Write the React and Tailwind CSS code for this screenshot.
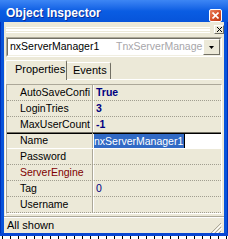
import React from "react";

const rows = [
  { name: "AutoSaveConfi", value: "True", bold: true },
  { name: "LoginTries", value: "3", bold: true },
  { name: "MaxUserCount", value: "-1", bold: true },
  { name: "Name", value: "nxServerManager1", selected: true },
  { name: "Password", value: "" },
  { name: "ServerEngine", value: "", isRef: true },
  { name: "Tag", value: "0" },
  { name: "Username", value: "" },
];

const ticks = Array.from({ length: 29 }, (_, i) => i);

const CloseButton = () => (
  <div className="w-[13px] h-[13px] rounded-[2px] border border-white bg-gradient-to-br from-[#E8825F] via-[#D9532E] to-[#B9360F] flex items-center justify-center">
    <svg width="7" height="7" viewBox="0 0 7 7">
      <path d="M0.5 0.5 L6.5 6.5 M6.5 0.5 L0.5 6.5" stroke="#fff" strokeWidth="1.6" />
    </svg>
  </div>
);

const GridRow = ({ row, nextSelected }) => {
  const bottom = nextSelected
    ? "border-b border-solid border-[#716F64]"
    : row.selected
    ? "border-b border-solid border-white"
    : "border-b border-dotted border-[#A19E90]";
  return (
    <div
      className={
        "flex h-[16px] " +
        bottom +
        (row.selected ? " shadow-[inset_0_1px_0_#000]" : "")
      }
    >
      <div
        className={
          "w-[86px] shrink-0 pl-[13px] flex items-center border-r border-[#ACA899] whitespace-nowrap overflow-hidden " +
          (row.isRef ? "text-[#800000]" : "text-black")
        }
      >
        {row.name}
      </div>
      {row.selected ? (
        <div className="flex-1 flex items-center bg-white pl-[1px] mt-[1px]">
          <span className="bg-[#316AC5] text-white leading-[14px] h-[14px] pr-[1px]">
            {row.value}
          </span>
          <span className="w-[1px] h-[14px] bg-black" />
        </div>
      ) : (
        <div
          className={
            "flex-1 flex items-center border-l border-white pl-[2px] text-[#000080] " +
            (row.bold ? "font-bold" : "")
          }
        >
          {row.value}
        </div>
      )}
    </div>
  );
};

export default function App() {
  return (
    <div className="w-[228px] h-[239px] overflow-hidden flex flex-col bg-white font-['Liberation_Sans',Arial,sans-serif] text-[10.5px]">
      {/* title bar */}
      <div className="h-[22px] shrink-0 flex justify-between bg-gradient-to-b from-[#3D86F4] via-[#0A5DE3] to-[#0754DA]">
        <div className="pl-[6px] pt-[6px] text-white font-bold text-[12px] leading-[14px] [text-shadow:1px_1px_0_#0A2F9C]">
          Object Inspector
        </div>
        <div className="pr-[6px] pt-[9px]">
          <CloseButton />
        </div>
      </div>

      <div className="flex h-[211px] shrink-0">
        <div className="w-[4px] bg-[#0853DA] border-l border-[#0031B8]" />
        <div className="w-[220px] bg-[#ECE9D8] flex flex-col">
          {/* grabber */}
          <div className="h-[13px] flex items-start">
            <div className="ml-[2px] w-[204px] pt-[5px] flex flex-col">
              <div className="h-[3px] border-t border-white border-b border-[#ACA899]" />
              <div className="h-[3px] border-t border-white border-b border-[#ACA899]" />
            </div>
            <div className="ml-[4px] mt-[3px] w-[10px] h-[9px] border border-t-white border-l-white border-r-[#716F64] border-b-[#716F64] flex items-center justify-center">
              <svg width="5" height="5" viewBox="0 0 5 5">
                <path d="M0 0 L5 5 M5 0 L0 5" stroke="#000" strokeWidth="1" />
              </svg>
            </div>
          </div>

          {/* combo */}
          <div className="mt-[2px] mx-[2px] h-[20px] border border-t-[#ACA899] border-l-[#ACA899] border-r-white border-b-white">
            <div className="h-full border border-t-[#716F64] border-l-[#716F64] border-r-[#F1EFE2] border-b-[#F1EFE2] bg-white flex">
              <div className="flex-1 flex items-center pl-[2px] whitespace-nowrap overflow-hidden text-[10.5px]">
                <span className="w-[106px] shrink-0 text-black">nxServerManager1</span>
                <span className="text-[#A7A6AA]">TnxServerManage</span>
              </div>
              <div className="w-[17px] h-[16px] bg-[#ECE9D8] border border-t-white border-l-white border-r-[#716F64] border-b-[#716F64] flex items-center justify-center">
                <svg width="5" height="3" viewBox="0 0 5 3">
                  <path d="M0 0 H5 L2.5 3 Z" fill="#000" />
                </svg>
              </div>
            </div>
          </div>

          {/* tabs */}
          <div className="mt-[3px] ml-[1px] mr-[2px] h-[20px] flex items-end border-b border-white">
            <div className="relative -mb-px h-[20px] w-[62px] bg-[#ECE9D8] border-t border-l border-white border-r border-r-[#716F64] rounded-t-[2px] pl-[9px] pt-[2px] leading-[12px] text-black text-[11px]">
              Properties
            </div>
            <div className="h-[17px] w-[44px] border-t border-white border-r border-r-[#716F64] rounded-tr-[2px] pl-[6px] pt-[1px] leading-[12px] text-black text-[11px]">
              Events
            </div>
          </div>

          {/* page */}
          <div className="ml-[1px] mr-[1px] flex-1 border-l border-white flex flex-col">
            <div className="mt-[4px] w-[216px] border-t border-l border-[#ACA899] border-r border-r-white border-b border-b-white flex flex-col">
              {rows.map((row, i) => (
                <GridRow
                  key={row.name}
                  row={row}
                  nextSelected={rows[i + 1] && rows[i + 1].selected}
                />
              ))}
            </div>
          </div>

          {/* status */}
          <div className="h-[17px] border-t border-[#ACA899] flex">
            <div className="flex-1 border-t border-white flex items-center justify-between pl-[3px]">
              <span className="text-black text-[11px]">All shown</span>
              <svg width="12" height="12" viewBox="0 0 12 12" className="mr-[2px] mt-[4px]">
                <path d="M11 1 L1 11 M11 5 L5 11 M11 9 L9 11" stroke="#ACA899" strokeWidth="1" />
                <path d="M12 2 L2 12 M12 6 L6 12 M12 10 L10 12" stroke="#fff" strokeWidth="1" />
              </svg>
            </div>
          </div>
        </div>
        <div className="w-[4px] bg-[#0853DA] border-r border-[#0031B8]" />
      </div>

      <div className="h-[3px] shrink-0 bg-[#0846D2]" />
      <div className="h-[3px] shrink-0 flex pl-[2px] bg-white">
        {ticks.map((t) => (
          <div key={t} className="w-[8px] shrink-0 border-l border-black" />
        ))}
      </div>
    </div>
  );
}
